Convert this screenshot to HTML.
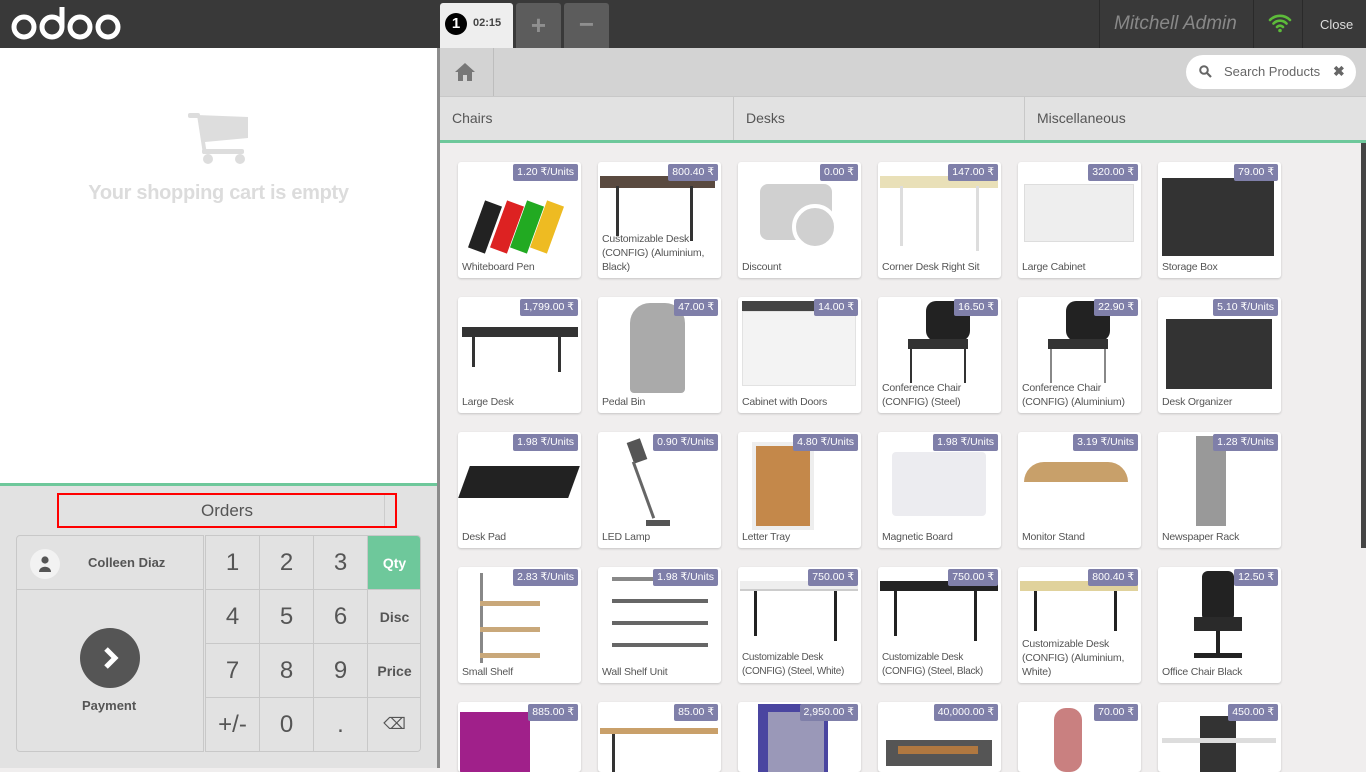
<!DOCTYPE html>
<html><head><meta charset="utf-8"><style>
*{box-sizing:border-box;margin:0;padding:0}
body{width:1366px;height:768px;overflow:hidden;font-family:"Liberation Sans",sans-serif;background:#f0eeee;position:relative}
.a{position:absolute}
.hdr{left:0;top:0;width:1366px;height:48px;background:#393939}
.card{position:absolute;width:123px;height:116px;background:#fff;border-radius:3px;box-shadow:0 1px 2px rgba(0,0,0,.18);overflow:hidden}
.pr{position:absolute;right:3px;top:2px;background:#7f7fa9;color:#fff;font-size:10.5px;padding:2px 4px;border-radius:2px;line-height:13px}
.nm{position:absolute;left:4px;bottom:4px;right:2px;font-size:10.5px;color:#555;line-height:14px;letter-spacing:-0.2px}
.key{position:absolute;background:#e2e2e2;border-right:1px solid #c8c8c8;border-bottom:1px solid #c8c8c8;color:#555;text-align:center;font-size:24px;line-height:54px}
.mode{font-size:14px;font-weight:bold}
</style></head><body>
<div class="a hdr"></div>
<svg class="a" style="left:8px;top:4px" width="116" height="40" viewBox="0 0 116 40"><g fill="none" stroke="#fff" stroke-width="5"><circle cx="16" cy="23" r="10"/><circle cx="44" cy="23" r="10"/><path d="M54 3 V23"/><circle cx="72" cy="23" r="10"/><circle cx="100" cy="23" r="10"/></g></svg>
<div class="a" style="left:440px;top:3px;width:73px;height:45px;background:#eee;border-radius:3px 3px 0 0"></div>
<div class="a" style="left:445px;top:13px;width:22px;height:22px;border-radius:50%;background:#000;color:#fff;font-weight:bold;font-size:15px;text-align:center;line-height:22px">1</div>
<div class="a" style="left:473px;top:17px;font-size:11px;font-weight:bold;color:#444">02:15</div>
<div class="a" style="left:516px;top:3px;width:45px;height:45px;background:#5c5c5c;border-radius:3px 3px 0 0;color:#8f8f8f;font-size:26px;font-weight:bold;text-align:center;line-height:44px">+</div>
<div class="a" style="left:564px;top:3px;width:45px;height:45px;background:#5c5c5c;border-radius:3px 3px 0 0;color:#8f8f8f;font-size:26px;font-weight:bold;text-align:center;line-height:42px">−</div>
<div class="a" style="left:1099px;top:0;width:1px;height:48px;background:#2a2a2a"></div>
<div class="a" style="left:1114px;top:13px;font-size:19px;font-style:italic;color:#888">Mitchell Admin</div>
<div class="a" style="left:1253px;top:0;width:1px;height:48px;background:#2a2a2a"></div>
<svg class="a" style="left:1268px;top:13px" width="24" height="20" viewBox="0 0 24 20"><path d="M2 7a14 14 0 0 1 20 0M5.5 10.5a9 9 0 0 1 13 0M9 14a4 4 0 0 1 6 0" stroke="#5dbb3a" stroke-width="2.6" fill="none" stroke-linecap="round"/><circle cx="12" cy="17.5" r="1.8" fill="#5dbb3a"/></svg>
<div class="a" style="left:1302px;top:0;width:1px;height:48px;background:#2a2a2a"></div>
<div class="a" style="left:1320px;top:17px;font-size:13px;color:#ddd">Close</div>

<div class="a" style="left:0;top:48px;width:437px;height:435px;background:#fff"></div>
<svg class="a" style="left:188px;top:112px" width="62" height="52" viewBox="0 0 62 52"><rect x="0" y="1" width="12" height="5" rx="2" fill="#ddd"/><path d="M9 3 L15 42 L19 42 L17 30 L60 26 L60 5 Z" fill="#ddd"/><rect x="14" y="37" width="42" height="5" rx="2" fill="#ddd"/><circle cx="20" cy="47" r="5" fill="#ddd"/><circle cx="52" cy="47" r="5" fill="#ddd"/></svg>
<div class="a" style="left:0;top:182px;width:437px;text-align:center;font-size:20px;font-weight:bold;color:#dcdcdc;letter-spacing:-0.3px">Your shopping cart is empty</div>
<div class="a" style="left:0;top:483px;width:437px;height:3px;background:#6ec89b"></div>
<div class="a" style="left:0;top:486px;width:437px;height:282px;background:#e2e2e2"></div>
<div class="a" style="left:437px;top:48px;width:3px;height:720px;background:#8c8c8c"></div>
<div class="a" style="left:57px;top:493px;width:340px;height:35px;border:2px solid #f00;text-align:center;font-size:17px;color:#555;line-height:31px">Orders</div>
<div class="a" style="left:384px;top:495px;width:1px;height:31px;background:#ccc"></div>
<div class="a" style="left:16px;top:535px;width:188px;height:217px;border:1px solid #c8c8c8;border-radius:4px 0 0 4px;background:#e2e2e2"></div>
<div class="a" style="left:17px;top:589px;width:186px;height:1px;background:#c8c8c8"></div>
<div class="a" style="left:30px;top:549px;width:30px;height:30px;border-radius:50%;background:#f2f2f2"></div>
<svg class="a" style="left:38px;top:556px" width="14" height="16" viewBox="0 0 14 16"><circle cx="7" cy="4" r="3.6" fill="#555"/><path d="M1 16 C1 9 13 9 13 16 Z" fill="#555"/></svg>
<div class="a" style="left:88px;top:555px;font-size:13px;font-weight:bold;color:#555">Colleen Diaz</div>
<div class="a" style="left:80px;top:628px;width:60px;height:60px;border-radius:50%;background:#555"></div>
<svg class="a" style="left:101px;top:646px" width="20" height="24" viewBox="0 0 20 24"><path d="M5 3 L14 12 L5 21" stroke="#fff" stroke-width="5" fill="none"/></svg>
<div class="a" style="left:82px;top:698px;font-size:13px;font-weight:bold;color:#555">Payment</div>
<div class="a" style="left:205px;top:535px;width:216px;height:217px;border:1px solid #c8c8c8;border-radius:0 4px 4px 0;overflow:hidden">
<div class="key" style="left:0;top:0;width:54px;height:54px">1</div><div class="key" style="left:54px;top:0;width:54px;height:54px">2</div><div class="key" style="left:108px;top:0;width:54px;height:54px">3</div><div class="key mode" style="left:162px;top:0;width:54px;height:54px;background:#6ec89b;color:#fff">Qty</div>
<div class="key" style="left:0;top:54px;width:54px;height:54px">4</div><div class="key" style="left:54px;top:54px;width:54px;height:54px">5</div><div class="key" style="left:108px;top:54px;width:54px;height:54px">6</div><div class="key mode" style="left:162px;top:54px;width:54px;height:54px">Disc</div>
<div class="key" style="left:0;top:108px;width:54px;height:54px">7</div><div class="key" style="left:54px;top:108px;width:54px;height:54px">8</div><div class="key" style="left:108px;top:108px;width:54px;height:54px">9</div><div class="key mode" style="left:162px;top:108px;width:54px;height:54px">Price</div>
<div class="key" style="left:0;top:162px;width:54px;height:54px">+/-</div><div class="key" style="left:54px;top:162px;width:54px;height:54px">0</div><div class="key" style="left:108px;top:162px;width:54px;height:54px">.</div><div class="key" style="left:162px;top:162px;width:54px;height:54px;font-size:16px">⌫</div>
</div>

<div class="a" style="left:440px;top:48px;width:926px;height:48px;background:#d3d3d3"></div>
<div class="a" style="left:493px;top:48px;width:1px;height:48px;background:#bdbdbd"></div>
<svg class="a" style="left:454px;top:62px" width="22" height="20" viewBox="0 0 22 20"><path d="M11 1 L1 10 L4 10 L4 19 L9 19 L9 13 L13 13 L13 19 L18 19 L18 10 L21 10 Z" fill="#777"/></svg>
<div class="a" style="left:1186px;top:55px;width:170px;height:34px;border-radius:17px;background:#fff"></div>
<svg class="a" style="left:1199px;top:65px" width="13" height="13" viewBox="0 0 13 13"><circle cx="5" cy="5" r="3.8" stroke="#666" stroke-width="2" fill="none"/><path d="M8 8 L12 12" stroke="#666" stroke-width="2.2"/></svg>
<div class="a" style="left:1224px;top:64px;font-size:13px;color:#666">Search Products</div>
<div class="a" style="left:1333px;top:63px;font-size:14px;color:#666;font-weight:bold">✖</div>
<div class="a" style="left:440px;top:96px;width:926px;height:44px;background:#e2e2e2;border-top:1px solid #c8c8c8"></div>
<div class="a" style="left:733px;top:97px;width:1px;height:43px;background:#c8c8c8"></div>
<div class="a" style="left:1024px;top:97px;width:1px;height:43px;background:#c8c8c8"></div>
<div class="a" style="left:452px;top:110px;font-size:14px;color:#555">Chairs</div>
<div class="a" style="left:746px;top:110px;font-size:14px;color:#555">Desks</div>
<div class="a" style="left:1037px;top:110px;font-size:14px;color:#555">Miscellaneous</div>
<div class="a" style="left:440px;top:140px;width:926px;height:3px;background:#6ec89b"></div>
<div class="a" style="left:1361px;top:143px;width:5px;height:405px;background:#444"></div>

<div class="card" style="left:458px;top:162px"><div class="a" style="left:18px;top:40px;width:18px;height:50px;background:#222;transform:rotate(20deg)"></div><div class="a" style="left:40px;top:40px;width:18px;height:50px;background:#d22;transform:rotate(20deg)"></div><div class="a" style="left:60px;top:40px;width:18px;height:50px;background:#2a2;transform:rotate(20deg)"></div><div class="a" style="left:80px;top:40px;width:18px;height:50px;background:#eb2;transform:rotate(20deg)"></div><div class="pr">1.20 ₹/Units</div><div class="nm">Whiteboard Pen</div></div>
<div class="card" style="left:598px;top:162px"><div class="a" style="left:2px;top:14px;width:115px;height:12px;background:#5a4a40"></div><div class="a" style="left:18px;top:24px;width:3px;height:50px;background:#333"></div><div class="a" style="left:92px;top:24px;width:3px;height:55px;background:#333"></div><div class="pr">800.40 ₹</div><div class="nm">Customizable Desk (CONFIG) (Aluminium, Black)</div></div>
<div class="card" style="left:738px;top:162px"><div class="a" style="left:22px;top:22px;width:72px;height:56px;border-radius:8px;background:#d0d0d0"></div><div class="a" style="left:54px;top:42px;width:46px;height:46px;border-radius:50%;background:#d0d0d0;border:4px solid #fff"></div><div class="pr">0.00 ₹</div><div class="nm">Discount</div></div>
<div class="card" style="left:878px;top:162px"><div class="a" style="left:2px;top:14px;width:118px;height:12px;background:#e9e0b8"></div><div class="a" style="left:22px;top:24px;width:3px;height:60px;background:#ddd"></div><div class="a" style="left:98px;top:24px;width:3px;height:65px;background:#ddd"></div><div class="pr">147.00 ₹</div><div class="nm">Corner Desk Right Sit</div></div>
<div class="card" style="left:1018px;top:162px"><div class="a" style="left:6px;top:22px;width:110px;height:58px;background:#eee;border:1px solid #ddd"></div><div class="pr">320.00 ₹</div><div class="nm">Large Cabinet</div></div>
<div class="card" style="left:1158px;top:162px"><div class="a" style="left:4px;top:16px;width:112px;height:78px;background:#333"></div><div class="pr">79.00 ₹</div><div class="nm">Storage Box</div></div>

<div class="card" style="left:458px;top:297px"><div class="a" style="left:4px;top:30px;width:116px;height:10px;background:#333"></div><div class="a" style="left:14px;top:40px;width:3px;height:30px;background:#333"></div><div class="a" style="left:100px;top:40px;width:3px;height:35px;background:#333"></div><div class="pr">1,799.00 ₹</div><div class="nm">Large Desk</div></div>
<div class="card" style="left:598px;top:297px"><div class="a" style="left:32px;top:6px;width:55px;height:90px;border-radius:20px 20px 4px 4px;background:#aaa"></div><div class="pr">47.00 ₹</div><div class="nm">Pedal Bin</div></div>
<div class="card" style="left:738px;top:297px"><div class="a" style="left:4px;top:4px;width:114px;height:10px;background:#444"></div><div class="a" style="left:4px;top:14px;width:114px;height:75px;background:#f3f3f3;border:1px solid #e2e2e2"></div><div class="pr">14.00 ₹</div><div class="nm">Cabinet with Doors</div></div>
<div class="card" style="left:878px;top:297px"><div class="a" style="left:48px;top:4px;width:44px;height:40px;border-radius:10px;background:#222"></div><div class="a" style="left:30px;top:42px;width:60px;height:10px;background:#333"></div><div class="a" style="left:32px;top:52px;width:2px;height:34px;background:#333"></div><div class="a" style="left:86px;top:52px;width:2px;height:34px;background:#333"></div><div class="pr">16.50 ₹</div><div class="nm">Conference Chair (CONFIG) (Steel)</div></div>
<div class="card" style="left:1018px;top:297px"><div class="a" style="left:48px;top:4px;width:44px;height:40px;border-radius:10px;background:#222"></div><div class="a" style="left:30px;top:42px;width:60px;height:10px;background:#333"></div><div class="a" style="left:32px;top:52px;width:2px;height:34px;background:#888"></div><div class="a" style="left:86px;top:52px;width:2px;height:34px;background:#888"></div><div class="pr">22.90 ₹</div><div class="nm">Conference Chair (CONFIG) (Aluminium)</div></div>
<div class="card" style="left:1158px;top:297px"><div class="a" style="left:8px;top:22px;width:106px;height:70px;background:#333"></div><div class="pr">5.10 ₹/Units</div><div class="nm">Desk Organizer</div></div>

<div class="card" style="left:458px;top:432px"><div class="a" style="left:6px;top:34px;width:110px;height:32px;background:#222;transform:skewX(-20deg)"></div><div class="pr">1.98 ₹/Units</div><div class="nm">Desk Pad</div></div>
<div class="card" style="left:598px;top:432px"><div class="a" style="left:32px;top:8px;width:14px;height:22px;background:#555;transform:rotate(-20deg)"></div><div class="a" style="left:44px;top:28px;width:3px;height:60px;background:#666;transform:rotate(-20deg)"></div><div class="a" style="left:48px;top:88px;width:24px;height:6px;background:#555"></div><div class="pr">0.90 ₹/Units</div><div class="nm">LED Lamp</div></div>
<div class="card" style="left:738px;top:432px"><div class="a" style="left:14px;top:10px;width:62px;height:88px;background:#c4884a;border:4px solid #eee"></div><div class="pr">4.80 ₹/Units</div><div class="nm">Letter Tray</div></div>
<div class="card" style="left:878px;top:432px"><div class="a" style="left:14px;top:20px;width:94px;height:64px;background:#ececf0;border-radius:4px"></div><div class="pr">1.98 ₹/Units</div><div class="nm">Magnetic Board</div></div>
<div class="card" style="left:1018px;top:432px"><div class="a" style="left:6px;top:30px;width:104px;height:20px;background:#c8a06a;border-radius:20px 20px 0 0"></div><div class="pr">3.19 ₹/Units</div><div class="nm">Monitor Stand</div></div>
<div class="card" style="left:1158px;top:432px"><div class="a" style="left:38px;top:4px;width:30px;height:90px;background:#999"></div><div class="pr">1.28 ₹/Units</div><div class="nm">Newspaper Rack</div></div>

<div class="card" style="left:458px;top:567px"><div class="a" style="left:22px;top:6px;width:3px;height:90px;background:#888"></div><div class="a" style="left:22px;top:34px;width:60px;height:5px;background:#c9a87a"></div><div class="a" style="left:22px;top:60px;width:60px;height:5px;background:#c9a87a"></div><div class="a" style="left:22px;top:86px;width:60px;height:5px;background:#c9a87a"></div><div class="pr">2.83 ₹/Units</div><div class="nm">Small Shelf</div></div>
<div class="card" style="left:598px;top:567px"><div class="a" style="left:14px;top:10px;width:96px;height:4px;background:#888"></div><div class="a" style="left:14px;top:32px;width:96px;height:4px;background:#666"></div><div class="a" style="left:14px;top:54px;width:96px;height:4px;background:#666"></div><div class="a" style="left:14px;top:76px;width:96px;height:4px;background:#666"></div><div class="pr">1.98 ₹/Units</div><div class="nm">Wall Shelf Unit</div></div>
<div class="card" style="left:738px;top:567px"><div class="a" style="left:2px;top:14px;width:118px;height:10px;background:#eee;border-bottom:2px solid #ccc"></div><div class="a" style="left:16px;top:24px;width:3px;height:45px;background:#222"></div><div class="a" style="left:96px;top:24px;width:3px;height:50px;background:#222"></div><div class="pr">750.00 ₹</div><div class="nm" style="font-size:10px;letter-spacing:-0.3px">Customizable Desk (CONFIG) (Steel, White)</div></div>
<div class="card" style="left:878px;top:567px"><div class="a" style="left:2px;top:14px;width:118px;height:10px;background:#222"></div><div class="a" style="left:16px;top:24px;width:3px;height:45px;background:#222"></div><div class="a" style="left:96px;top:24px;width:3px;height:50px;background:#222"></div><div class="pr">750.00 ₹</div><div class="nm" style="font-size:10px;letter-spacing:-0.3px">Customizable Desk (CONFIG) (Steel, Black)</div></div>
<div class="card" style="left:1018px;top:567px"><div class="a" style="left:2px;top:14px;width:118px;height:10px;background:#e0d29c"></div><div class="a" style="left:16px;top:24px;width:3px;height:40px;background:#222"></div><div class="a" style="left:96px;top:24px;width:3px;height:40px;background:#222"></div><div class="pr">800.40 ₹</div><div class="nm">Customizable Desk (CONFIG) (Aluminium, White)</div></div>
<div class="card" style="left:1158px;top:567px"><div class="a" style="left:44px;top:4px;width:32px;height:50px;border-radius:6px;background:#222"></div><div class="a" style="left:36px;top:50px;width:48px;height:14px;background:#2a2a2a"></div><div class="a" style="left:58px;top:64px;width:4px;height:22px;background:#222"></div><div class="a" style="left:36px;top:86px;width:48px;height:5px;background:#222"></div><div class="pr">12.50 ₹</div><div class="nm">Office Chair Black</div></div>

<div class="card" style="left:458px;top:702px;height:70px"><div class="a" style="left:2px;top:10px;width:70px;height:60px;background:#a0208a"></div><div class="pr">885.00 ₹</div></div>
<div class="card" style="left:598px;top:702px;height:70px"><div class="a" style="left:2px;top:26px;width:118px;height:6px;background:#c9a06a"></div><div class="a" style="left:14px;top:32px;width:3px;height:40px;background:#333"></div><div class="pr">85.00 ₹</div></div>
<div class="card" style="left:738px;top:702px;height:70px"><div class="a" style="left:20px;top:2px;width:70px;height:70px;background:#4a45a0"></div><div class="a" style="left:30px;top:10px;width:56px;height:62px;background:#9a98b8"></div><div class="pr">2,950.00 ₹</div></div>
<div class="card" style="left:878px;top:702px;height:70px"><div class="a" style="left:8px;top:38px;width:106px;height:26px;background:#555"></div><div class="a" style="left:20px;top:44px;width:80px;height:8px;background:#b07840"></div><div class="pr">40,000.00 ₹</div></div>
<div class="card" style="left:1018px;top:702px;height:70px"><div class="a" style="left:36px;top:6px;width:28px;height:64px;border-radius:12px;background:#c98080"></div><div class="pr">70.00 ₹</div></div>
<div class="card" style="left:1158px;top:702px;height:70px"><div class="a" style="left:42px;top:14px;width:36px;height:60px;background:#333"></div><div class="a" style="left:4px;top:36px;width:114px;height:5px;background:#ddd"></div><div class="pr">450.00 ₹</div></div>
</body></html>
